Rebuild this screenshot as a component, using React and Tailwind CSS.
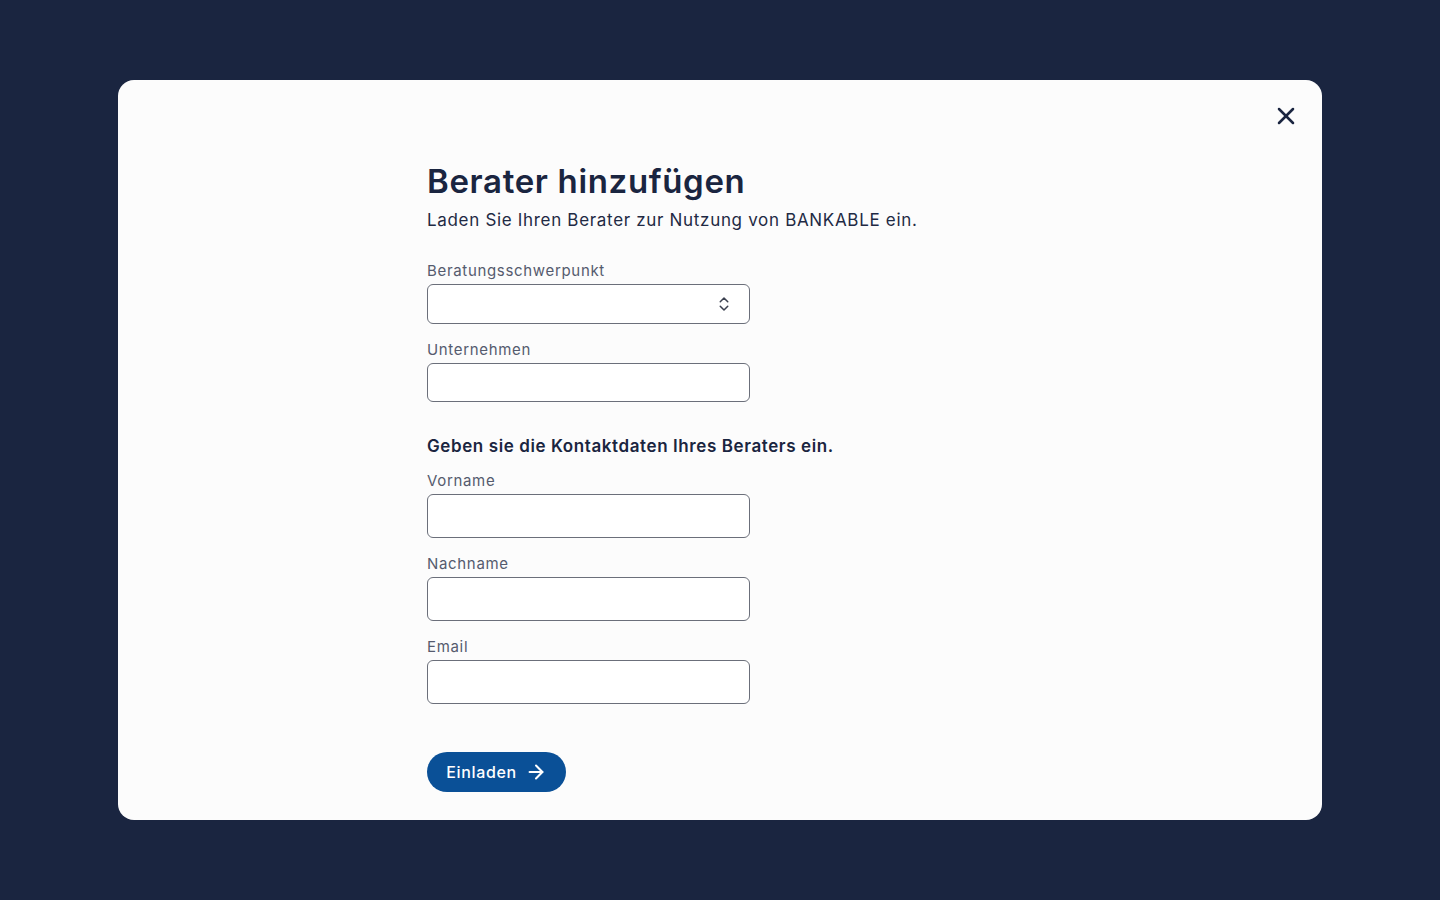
import React from 'react';
import { X, ArrowRight, ChevronsUpDown } from 'lucide-react';

const font = { fontFamily: 'Inter, "Noto Sans", sans-serif' };

const Field = ({ label, height = 'h-[44px]', children }) => (
    <div className="flex flex-col">
        <label className="text-[15px] leading-[20px] tracking-[0.045em] text-[#555b6e] mb-[3px]">{label}</label>
        <div className={`relative w-[323px] ${height} rounded-[6px] border border-[#6b6f7a] bg-white`}>
            {children}
        </div>
    </div>
);

const App = () => {
    return (
        <div className="min-h-screen w-full bg-[#1a2540] flex items-center justify-center" style={font}>
            <div className="relative w-[1204px] h-[740px] bg-[#fcfcfc] rounded-[16px]">
                <button className="absolute right-[22px] top-[22px] w-[28px] h-[28px] flex items-center justify-center text-[#1a2540]">
                    <X className="w-[28px] h-[28px]" strokeWidth={2.2} />
                </button>

                <div className="pl-[309px] pt-[81px] flex flex-col text-[#1a2540]">
                    <h1 className="text-[33px] leading-[40px] font-semibold tracking-[0.02em]">Berater hinzufügen</h1>
                    <p className="mt-[7px] text-[17px] leading-[24px] tracking-[0.04em] text-[#1f2a44]">
                        Laden Sie Ihren Berater zur Nutzung von BANKABLE ein.
                    </p>

                    <div className="mt-[29px] flex flex-col gap-[16px]">
                        <Field label="Beratungsschwerpunkt" height="h-[40px]">
                            <ChevronsUpDown className="absolute right-[16px] top-[10px] w-[18px] h-[18px] text-[#3b4150]" strokeWidth={2} />
                        </Field>
                        <Field label="Unternehmen" height="h-[39px]" />
                    </div>

                    <h2 className="mt-[32px] text-[17px] leading-[24px] font-semibold tracking-[0.035em]">
                        Geben sie die Kontaktdaten Ihres Beraters ein.
                    </h2>

                    <div className="mt-[13px] flex flex-col gap-[16px]">
                        <Field label="Vorname" />
                        <Field label="Nachname" />
                        <Field label="Email" />
                    </div>

                    <div className="mt-[48px]">
                        <button className="h-[40px] w-[139px] rounded-full bg-[#0a5097] text-white flex items-center justify-center gap-[8px] text-[16px] font-medium tracking-[0.04em]">
                            Einladen
                            <ArrowRight className="w-[22px] h-[22px]" strokeWidth={2.25} />
                        </button>
                    </div>
                </div>
            </div>
        </div>
    );
};

export default App;
